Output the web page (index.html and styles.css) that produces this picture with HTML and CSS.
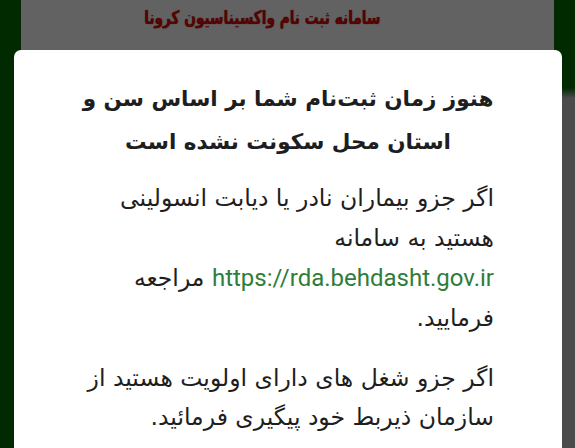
FILE: index.html
```html
<!DOCTYPE html>
<html lang="fa" dir="rtl">
<head>
<meta charset="utf-8">
<link rel="stylesheet" href="styles.css">
</head>
<body>
<div class="screen">
  <div class="gutter-left"></div>
  <div class="main">
    <div class="topbar"><span class="title">سامانه ثبت نام واکسیناسیون کرونا</span></div>
    <div class="card">
      <h1 class="heading">هنوز زمان ثبت‌نام شما بر اساس سن و<br>استان محل سکونت نشده است</h1>
      <p class="para">اگر جزو بیماران نادر یا دیابت انسولینی<br>هستید به سامانه<br><a class="link" dir="ltr">https://rda.behdasht.gov.ir</a> مراجعه<br>فرمایید.</p>
      <p class="para para2">اگر جزو شغل های دارای اولویت هستید از<br>سازمان ذیربط خود پیگیری فرمائید.</p>
    </div>
  </div>
  <div class="gutter-right"></div>
</div>
</body>
</html>
```
FILE: styles.css
```css
html, body {
  margin: 0;
  padding: 0;
}
body {
  width: 575px;
  height: 448px;
  overflow: hidden;
  background: #012a01;
  font-family: "DejaVu Sans", sans-serif;
}
.screen {
  display: flex;
  flex-direction: row;
  height: 448px;
  direction: ltr;
}
.gutter-left {
  width: 14px;
  flex: none;
  background: #012a01;
}
.gutter-right {
  width: 13px;
  flex: none;
  background: linear-gradient(to bottom, #012a01 0, #012a01 88px, #4b4b4b 98px, #4b4b4b 100%);
}
.main {
  flex: 1;
  display: flex;
  flex-direction: column;
}
.topbar {
  height: 50px;
  margin: 0 8px 0 7px;
  background: #626262;
  display: flex;
  justify-content: flex-start;
  padding: 5px 0 0 86px;
  box-sizing: border-box;
}
.title {
  display: inline-block;
  direction: rtl;
  font-weight: bold;
  font-size: 18px;
  color: #560303;
  line-height: 26px;
  height: 26px;
  transform: scale(0.76, 1.05);
  transform-origin: center;
  text-shadow: 0 0 1px #3a0000;
}
.card {
  flex: 1;
  background: #fff;
  border-radius: 7px 7px 0 0;
  direction: rtl;
  padding: 27px 68px 0 68px;
  color: #1e1e1e;
}
.heading {
  margin: 0;
  font-size: 21.5px;
  font-weight: bold;
  line-height: 43px;
  text-align: center;
}
.para {
  margin: 15px 0 0 -8px;
  font-size: 23.5px;
  line-height: 40px;
  text-align: right;
}
.para2 {
  margin-top: 21px;
  line-height: 39px;
}
.link {
  font-family: Roboto, sans-serif;
  font-size: 24px;
  color: #2e7d3a;
}
```
